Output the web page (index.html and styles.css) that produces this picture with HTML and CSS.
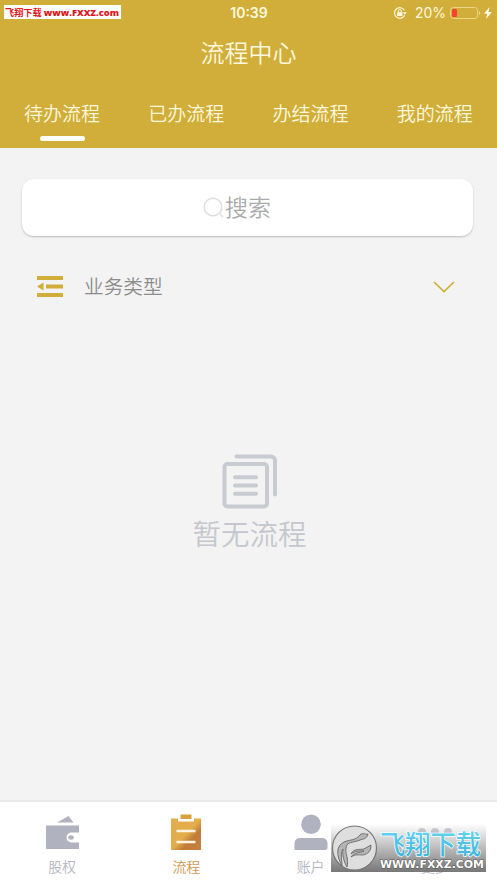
FILE: index.html
```html
<!DOCTYPE html>
<html lang="zh-CN">
<head>
<meta charset="utf-8">
<title>流程中心</title>
<link rel="stylesheet" href="styles.css">
</head>
<body>
<div class="app">
  <header class="header">
    <div class="status">
      <span class="source">飞翔下载 <b>www.FXXZ.com</b></span>
      <span class="time">10:39</span>
      <span class="power">
        <svg class="lock" viewBox="0 0 14 14" fill="none" stroke="#fff8df"><path d="M11.4 4.2A5.3 5.3 0 1 0 11.6 9.3" stroke-width="1.1"/><path d="M9.8 6.2h4l-2 2.6z" fill="#fff8df" stroke="none"/><rect x="4.2" y="6.2" width="5.2" height="3.8" fill="#fff8df" stroke="none"/><path d="M5.3 6.500V5a1.5 1.5 0 0 1 3 0v1.5"/></svg>
        <span class="percent">20%</span>
        <svg class="battery" viewBox="0 0 32 14"><rect x=".6" y="1.5" width="27" height="11" rx="3" fill="none" stroke="#ecd68b"/><rect x="2" y="3" width="5" height="8" rx="1" fill="#f8432e"/><path d="M29 5v4c1.8-.6 1.8-3.400 0-4" fill="#ecd68b"/></svg>
        <svg class="bolt" viewBox="0 0 8 12"><path d="M5.500 0L0 6.700h3.200L2 12l6-7H4.500z" fill="#fffbe9"/></svg>
      </span>
    </div>
    <h1 class="title">流程中心</h1>
    <nav class="tabs">
      <a class="tab active">待办流程</a><a class="tab">已办流程</a><a class="tab">办结流程</a><a class="tab">我的流程</a>
    </nav>
  </header>
  <main class="main">
    <div class="search">
      <svg class="glass" viewBox="0 0 22 22" fill="none" stroke="#dedede" stroke-width="1.500"><circle cx="10" cy="10" r="8.800"/><path d="M16.500 16.500l3.500 3.500"/></svg>
      <span class="search-label">搜索</span>
    </div>
    <div class="filter">
      <svg class="list" viewBox="0 0 26 22" fill="#d0ae39"><path d="M0 0h26v4H0zM9 8.500h17v4H9zM0 17h26v4H0zM0 10.500l6.500-4v8z"/></svg>
      <span class="filter-name">业务类型</span>
      <svg class="chevron" viewBox="0 0 22 12" fill="none" stroke="#d0ae39" stroke-width="1.700"><path d="M1 1l10 9.500L21 1"/></svg>
    </div>
    <div class="empty">
      <svg class="docs" viewBox="0 0 56 56" fill="none" stroke="#c9cbd2" stroke-width="4" stroke-linecap="round"><rect x="2.500" y="10" width="42.500" height="42.500" rx="3"/><path d="M14.500 2.500H49a4 4 0 0 1 4 4v34M13 23.300h21M13 31.500h21M13 39.700h21"/></svg>
      <span>暂无流程</span>
    </div>
  </main>
  <footer class="nav">
    <a class="item">
      <svg class="icon" viewBox="0 0 36 38" fill="#b0b2bf"><path d="M13 8.500L24.500 2l5 6.500zM2 11.500h33v7h-7.500a5 5 0 0 0 0 10H35v6.500H2z"/><ellipse cx="27" cy="23.500" rx="2.800" ry="2.200"/></svg>
      <span>股权</span>
    </a>
    <a class="item current">
      <svg class="icon" viewBox="0 0 36 38"><defs><linearGradient id="gold" x1="0" y1="0" x2="1" y2="1"><stop offset=".5" stop-color="#e3ad4c"/><stop offset=".68" stop-color="#c17b39"/><stop offset="1" stop-color="#c58145"/></linearGradient></defs><path d="M3 4.500h7v3h16v-3h7V36H3z" fill="url(#gold)"/><path d="M12.500.500h11V5h-11z" fill="#d9a23f"/><path d="M8.500 17h19M8.500 28h19" stroke="#fff5df" stroke-width="2.400"/></svg>
      <span>流程</span>
    </a>
    <a class="item">
      <svg class="icon" viewBox="0 0 36 38" fill="#b0b2bf"><circle cx="18" cy="10.200" r="9.800"/><path d="M1.500 36v-6.500q0-5.500 6-5.500h21q6 0 6 5.500V34q0 2-2 2z"/></svg>
      <span>账户</span>
    </a>
    <a class="item">
      <svg class="icon" viewBox="0 0 36 38" fill="#b0b2bf"><circle cx="5" cy="18" r="4"/><circle cx="18" cy="18" r="4"/><circle cx="31" cy="18" r="4"/></svg>
      <span>更多</span>
    </a>
    <div class="badge">
      <svg viewBox="0 0 155 48">
        <defs><linearGradient id="cyan" x1="0" y1="0" x2="0" y2="1"><stop stop-color="#70d9f5"/><stop offset="1" stop-color="#35afd9"/></linearGradient></defs>
        <circle cx="23.500" cy="24" r="22" fill="#dedede" stroke="#777" stroke-width="1.200"/>
        <path d="M11 42C5 31 5 22 13 18c7-3 11-1 16-7 3-3 6 0 8-1-1 5-5 5-8 6-7 3-13 1-14 8-1 6 3 11 1 19-3-5-5-12-4-18-3 5-1 10-1 17z" fill="#b5b5b5" stroke="#666" stroke-width=".9"/>
        <path d="M20 30c3-6 8-4 13-5l7-4c0 6-3 9-8 10-5 0-7-1-12 2 3-5 9-4 13-6-5 0-9 0-13 3z" fill="#b5b5b5" stroke="#666" stroke-width=".9"/>
        <text class="brand" x="49" y="30" textLength="101" lengthAdjust="spacingAndGlyphs">飞翔下载</text>
        <text class="domain" x="49" y="44" textLength="104" lengthAdjust="spacingAndGlyphs">WWW.FXXZ.COM</text>
      </svg>
    </div>
  </footer>
</div>
</body>
</html>
```
FILE: styles.css
```css
* { box-sizing: border-box; }
body { margin: 0; font-family: "Noto Sans CJK SC", sans-serif; font-weight: 350; }
.app { width: 497px; height: 883px; display: flex; flex-direction: column; background: #f3f3f3; overflow: hidden; }
.header { height: 148px; background: #d0ae39; color: #fff8df; display: flex; flex-direction: column; }
.status { height: 26px; display: grid; grid-template-columns: 1fr 60px 1fr; align-items: center; padding: 0 5px 0 4px; }
.source { width: 117px; height: 14px; background: #fff; color: #e0171b; font-size: 9.200px; font-weight: 700; line-height: 14px; white-space: nowrap; padding-left: 1px; margin-top: -2px; }
.source b { font-family: "Open Sans", sans-serif; font-size: 9.300px; }
.time { text-align: center; font: 600 14px/26px Inter, sans-serif; padding-left: 2px; }
.power { display: flex; justify-content: flex-end; align-items: center; }
.lock { width: 14px; height: 14px; margin-right: 8px; }
.percent { font: 400 14px/26px Inter, sans-serif; margin-right: 4px; }
.battery { width: 32px; height: 14px; margin-right: 2px; }
.bolt { width: 8px; height: 12px; }
.title { margin: 0; height: 52px; font-size: 24px; line-height: 52px; font-weight: 350; text-align: center; }
.tabs { height: 70px; display: grid; grid-template-columns: repeat(4, 1fr); }
.tab { display: flex; flex-direction: column; align-items: center; font-size: 19px; line-height: 28px; padding-top: 21px; }
.active::after { content: ""; width: 45px; height: 5px; border-radius: 3px; background: #fffef8; margin-top: 9px; }
.main { height: 652px; padding: 31px 24px 0 22px; display: flex; flex-direction: column; }
.search { height: 57px; background: #fff; border-radius: 12px; box-shadow: 0 1px 2px #bbb; display: flex; align-items: center; justify-content: center; color: #aaa; font-size: 23px; line-height: 52px; padding-right: 21px; }
.search-label { height: 56px; }
.glass { width: 22px; height: 22px; }
.filter { height: 50px; margin-top: 25px; padding: 0 18px 0 15px; display: flex; align-items: center; color: #8d8d8d; font-size: 19.700px; }
.list { width: 26px; height: 22px; margin: 2px 21px 0 0; }
.filter-name { flex: 1; margin-top: -2px; }
.chevron { width: 22px; height: 12px; margin-top: 2px; }
.empty { margin-top: 143px; padding-left: 4px; display: flex; flex-direction: column; align-items: center; color: #c5c7ce; font-size: 28.500px; line-height: 42px; }
.docs { width: 56px; height: 56px; margin: 0 0 2px 1px; }
.nav { position: relative; height: 83px; display: grid; grid-template-columns: repeat(4, 1fr); background: #fff; border-top: 2px solid #e9e9e9; }
.item { display: flex; flex-direction: column; align-items: center; padding-top: 12px; color: #b3b5c1; font-size: 14px; line-height: 20px; }
.current { color: #cf974f; }
.icon { width: 36px; height: 38px; margin-bottom: 4px; }
.badge { position: absolute; left: 331px; top: 22px; width: 155px; height: 48px; background: linear-gradient(rgba(255,255,255,.35), rgba(170,170,170,.88) 55%, rgba(115,115,115,.97)); }
.badge svg { display: block; width: 155px; height: 48px; }
.brand { font: 500 26px "Noto Sans CJK SC", sans-serif; fill: url(#cyan); stroke: #f4fdff; stroke-width: 1.500px; paint-order: stroke; }
.domain { font: 700 10.500px "DejaVu Sans", sans-serif; fill: #fff; stroke: #555; stroke-width: 1px; paint-order: stroke; }
```
